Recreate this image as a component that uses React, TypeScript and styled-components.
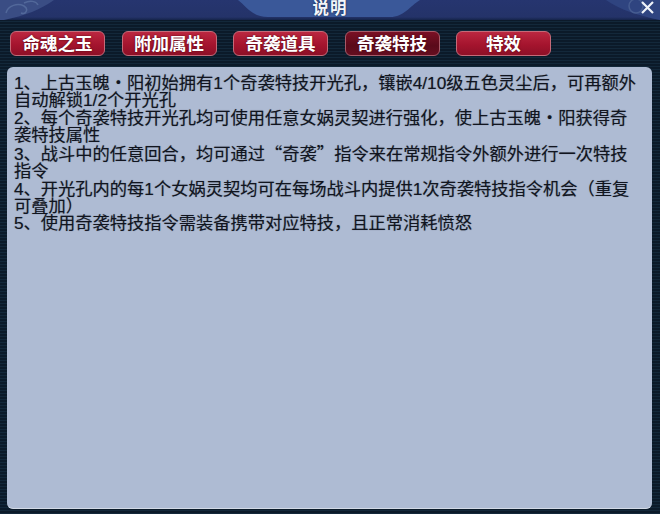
import React from "react";
import styled, { createGlobalStyle } from "styled-components";

const Global = createGlobalStyle`
  html, body { margin: 0; padding: 0; background: #0d1c2c; }
  #root { width: 660px; height: 514px; overflow: hidden; }
`;

const Window = styled.div`
  width: 660px;
  height: 514px;
  display: flex;
  flex-direction: column;
  font-family: "Liberation Sans", "Noto Sans CJK SC", sans-serif;
  background: repeating-linear-gradient(180deg, #13283a 0, #13283a 1px, #0b1a29 1px, #0b1a29 3px);
`;

const TitleBar = styled.header`
  position: relative;
  height: 20px;
  flex: none;
  display: flex;
  justify-content: center;
  align-items: flex-start;
  background: linear-gradient(180deg, #26356f 0%, #243369 85%, #15244a 100%);
  border-bottom: 1px solid #0c1a2a;
`;

const TitleArt = styled.svg`
  position: absolute;
  inset: 0;
  width: 660px;
  height: 20px;
`;

const Title = styled.h1`
  position: relative;
  margin: 0;
  color: #f2f5fa;
  font-size: 16.5px;
  line-height: 16px;
  font-weight: 700;
  letter-spacing: 1px;
  text-shadow: 0 0 2px #10203f;
`;

const Close = styled.svg`
  position: absolute;
  top: 0;
  right: 5px;
  width: 15px;
  height: 15px;
`;

const Tabs = styled.nav`
  display: flex;
  gap: 16.5px;
  padding: 10px 0 0 10px;
  height: 36px;
  flex: none;
  box-sizing: border-box;
`;

const Tab = styled.button<{ $active?: boolean }>`
  width: 95px;
  height: 25px;
  padding: 0;
  box-sizing: border-box;
  border-radius: 6px;
  border: 1px solid ${(p) => (p.$active ? "#a65a68" : "#c56a78")};
  background: ${(p) =>
    p.$active
      ? "linear-gradient(180deg, #7a1024 0%, #5a0a1a 60%, #650e20 100%)"
      : "linear-gradient(180deg, #bb2740 0%, #a5142e 55%, #8e1027 100%)"};
  color: #fff;
  font-family: inherit;
  font-size: 17.5px;
  line-height: 22px;
  font-weight: 700;
  text-shadow: 0 0 2px #4a0612;
`;

const Panel = styled.main`
  margin: 10px 8px 5px 7px;
  flex: 1;
  min-height: 0;
  box-sizing: border-box;
  padding: 8px 12px 0 7px;
  border-radius: 6px;
  border-bottom: 1px solid #d3dae6;
  background: #aebbd3;
  color: #11151f;
  font-size: 17.25px;
  line-height: 17.25px;
  text-shadow: 0 0 1px rgba(17, 21, 31, 0.45);
`;

const Line = styled.p`
  margin: 0;
  white-space: nowrap;
`;

const Quote = styled.span`
  font-family: "Noto Sans CJK SC", sans-serif;
`;

const tabs = ["命魂之玉", "附加属性", "奇袭道具", "奇袭特技", "特效"];

export default function App() {
  return (
    <Window>
      <Global />
      <TitleBar>
        <TitleArt viewBox="0 0 660 20" aria-hidden="true">
          <path d="M238 0 C246 6 252 17 268 17 L390 17 C404 17 410 6 420 0 Z" fill="#3a5899" />
          <path d="M0 0 H54 C42 9 24 16 4 20 H0 Z" fill="#3a4d84" />
          <path d="M6 13 c2 -8 12 -10 18 -7 c5 3 2 9 -3 7 M24 3 c6 -3 12 -2 14 2" fill="none" stroke="#52689a" strokeWidth="1.5" />
          <path d="M606 0 H660 V20 C640 16 620 10 606 0 Z" fill="#2f4480" />
          <circle cx="636" cy="6" r="7" fill="none" stroke="#465c90" strokeWidth="1.5" />
        </TitleArt>
        <Title>说明</Title>
        <Close viewBox="0 0 15 15" aria-label="关闭">
          <path d="M2 2 L13 13 M13 2 L2 13" stroke="#eef2f8" strokeWidth="2.2" />
        </Close>
      </TitleBar>
      <Tabs>
        {tabs.map((t, i) => (
          <Tab key={t} $active={i === 3}>
            {t}
          </Tab>
        ))}
      </Tabs>
      <Panel>
        <Line>1、上古玉魄・阳初始拥有1个奇袭特技开光孔，镶嵌4/10级五色灵尘后，可再额外</Line>
        <Line>自动解锁1/2个开光孔</Line>
        <Line>2、每个奇袭特技开光孔均可使用任意女娲灵契进行强化，使上古玉魄・阳获得奇</Line>
        <Line>袭特技属性</Line>
        <Line>
          3、战斗中的任意回合，均可通过<Quote>“奇袭”</Quote>指令来在常规指令外额外进行一次特技
        </Line>
        <Line>指令</Line>
        <Line>4、开光孔内的每1个女娲灵契均可在每场战斗内提供1次奇袭特技指令机会（重复</Line>
        <Line>可叠加）</Line>
        <Line>5、使用奇袭特技指令需装备携带对应特技，且正常消耗愤怒</Line>
      </Panel>
    </Window>
  );
}
